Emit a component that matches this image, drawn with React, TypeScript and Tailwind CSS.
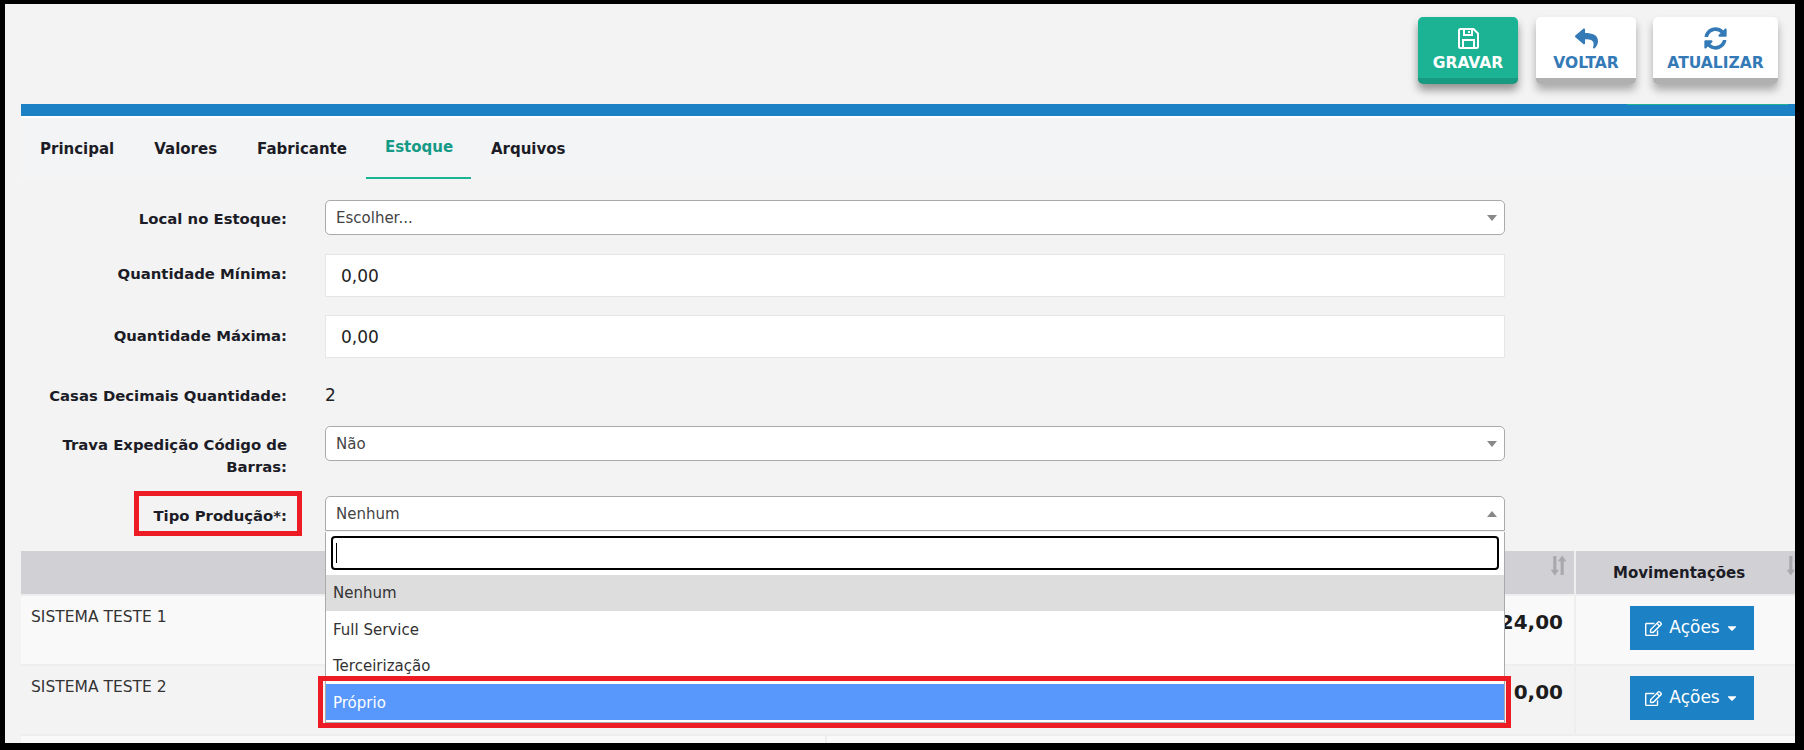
import { FaReply, FaSyncAlt, FaRegEdit, FaCaretDown } from 'react-icons/fa';

const font = "font-['DejaVu_Sans',sans-serif]";

function ActionButton({ icon, label, className }: { icon: React.ReactNode; label: string; className: string }) {
  return (
    <button className={`flex flex-col items-center rounded-[5px] pt-[6px] h-[67px] text-[15.5px] font-bold ${className}`}>
      <span className="text-[23px] h-[30px] flex items-center">{icon}</span>
      <span className="leading-[20px]">{label}</span>
    </button>
  );
}

function SaveIcon() {
  return (
    <svg width="21" height="21" viewBox="0 0 21 21" fill="none" stroke="currentColor" strokeWidth="2">
      <path d="M2.500 1h13l4.500 4.500v13a1.500 1.500 0 0 1-1.500 1.500h-16A1.500 1.500 0 0 1 1 18.500v-16A1.500 1.500 0 0 1 2.500 1z" />
      <path d="M6 1v6h8V1" />
      <path d="M11 3v2" />
      <path d="M5 20v-8h11v8" />
    </svg>
  );
}

function FormRow({ label, children, className, labelTop }: { label: React.ReactNode; children: React.ReactNode; className: string; labelTop: string }) {
  return (
    <div className={`flex items-start ${className}`}>
      <label className={`w-[266px] text-right text-[#1c1c26] text-[14.85px] leading-[22px] font-bold ${labelTop}`}>{label}</label>
      <div className="ml-[38px] w-[1180px]">{children}</div>
    </div>
  );
}

function SelectBox({ value, open }: { value: string; open?: boolean }) {
  return (
    <div className={`h-[35px] bg-white border border-[#aaaaaa] flex items-center justify-between pl-[10px] pr-[7px] text-[15px] text-[#444444] ${open ? 'rounded-t-[5px]' : 'rounded-[5px]'}`}>
      <span className="pt-[2px]">{value}</span>
      <svg width="10" height="6" viewBox="0 0 10 6" className="text-[#888888]" fill="currentColor">
        <path d={open ? 'M5 0l5 6H0z' : 'M0 0h10L5 6z'} />
      </svg>
    </div>
  );
}

function SortIcon() {
  return (
    <svg width="17" height="21" viewBox="0 0 16 20" className="text-[#a9a9ad]" fill="currentColor">
      <path d="M3 1h3v13h2.500L4.500 19.500.5 14H3z" />
      <path d="M10 19h3V6h2.500L11.500.5 7.500 6H10z" />
    </svg>
  );
}

function TableRow({ name, total, striped }: { name: string; total: string; striped: boolean }) {
  return (
    <div className={`flex h-[70px] border-b-2 border-[#eeeeee] ${striped ? 'bg-[#f9f9f9]' : 'bg-[#f3f3f3]'}`}>
      <div className="flex-1 relative pl-[10px] pt-[10px] text-[15.5px] text-[#333333]">
        {name}
        <span className="absolute right-[11px] top-[10px] text-[20px] leading-[32px] font-bold text-[#1c1c1c]">{total}</span>
      </div>
      <div className="w-[221px] border-l-2 border-[#eeeeee] pl-[54px] pt-[10px]">
        <button className="w-[124px] h-[44px] bg-[#1c81c5] text-white text-[17px] flex items-center justify-center">
          <FaRegEdit className="text-[17px] mr-[7px]" />
          <span>Ações</span>
          <FaCaretDown className="text-[14px] ml-[5px]" />
        </button>
      </div>
    </div>
  );
}

export default function App() {
  return (
    <div className={`relative h-screen w-full overflow-hidden bg-[#f3f3f4] border-solid border-black border-t-4 border-l-[5px] border-r-[9px] border-b-[7px] ${font}`}>
      {/* Toolbar */}
      <div className="h-[100px] flex justify-end items-start gap-[17px] pt-[13px] pr-[17px] pl-[16px]">
        <ActionButton
          icon={<SaveIcon />}
          label="GRAVAR"
          className="w-[100px] mr-[1px] bg-[#1bb394] text-white border-b-[6px] border-[#189a80] shadow-[0_6px_8px_rgba(0,0,0,0.4)]"
        />
        <ActionButton
          icon={<FaReply />}
          label="VOLTAR"
          className="w-[100px] bg-white text-[#337ab7] border-b-[6px] border-[#b0b0b0] shadow-[0_6px_8px_rgba(0,0,0,0.3)]"
        />
        <ActionButton
          icon={<FaSyncAlt />}
          label="ATUALIZAR"
          className="w-[125px] bg-white text-[#337ab7] border-b-[6px] border-[#b0b0b0] shadow-[0_6px_8px_rgba(0,0,0,0.3)]"
        />
      </div>

      <div className="pl-[16px]">
        <div className="relative h-[12px] bg-[#1c81c5]">
          <div className="absolute top-0 right-[7px] w-[161px] h-px bg-[#1bb394]" />
        </div>
        {/* Tabs */}
        <div className="h-[63px] bg-[#f3f4f6] border-t-2 border-white flex text-[15px] font-bold text-[#1c1c26]">
          <div className="pl-[19px] pr-[20px] pt-[20px]">Principal</div>
          <div className="px-[20px] pt-[20px]">Valores</div>
          <div className="px-[20px] pt-[20px]">Fabricante</div>
          <div className="ml-[-1px] pl-[19px] pt-[18px] w-[105px] h-[61px] border-b-2 border-[#1ab394] text-[#149a86]">Estoque</div>
          <div className="px-[20px] pt-[20px]">Arquivos</div>
        </div>

        {/* Form */}
        <FormRow label="Local no Estoque:" labelTop="pt-[8px]" className="mt-[21px]">
          <SelectBox value="Escolher..." />
        </FormRow>
        <FormRow label="Quantidade Mínima:" labelTop="pt-[9px]" className="mt-[19px]">
          <div className="h-[43px] bg-white border border-[#e5e6e7] flex items-center pl-[15px] pt-[2px] text-[17px] text-[#222222]">0,00</div>
        </FormRow>
        <FormRow label="Quantidade Máxima:" labelTop="pt-[10px]" className="mt-[18px]">
          <div className="h-[43px] bg-white border border-[#e5e6e7] flex items-center pl-[15px] pt-[3px] text-[17px] text-[#222222]">0,00</div>
        </FormRow>
        <FormRow label="Casas Decimais Quantidade:" labelTop="pt-[3px]" className="mt-[24px]">
          <div className="text-[17px] leading-[25px] pt-[1px] text-[#222222]">2</div>
        </FormRow>
        <FormRow label={<>Trava Expedição Código de<br />Barras:</>} labelTop="pt-[8px]" className="mt-[18px] h-[60px]">
          <SelectBox value="Não" />
        </FormRow>
        <FormRow label="Tipo Produção*:" labelTop="pt-[9px]" className="mt-[10px]">
          <SelectBox value="Nenhum" open />
        </FormRow>

        {/* Table behind the open dropdown */}
        <div className="mt-[20px]">
          <div className="flex h-[45px] bg-[#d1d1d5] border-b-2 border-[#eeeeee]">
            <div className="flex-1 flex justify-end pr-[7px] pt-[4px]">
              <SortIcon />
            </div>
            <div className="w-[221px] border-l-2 border-[#eeeeee] pl-[37px] pt-[11px] text-[15px] font-bold text-[#1c1c26] flex justify-between">
              <span>Movimentações</span>
              <span className="mr-[-8px] -mt-[7px]"><SortIcon /></span>
            </div>
          </div>
          <TableRow name="SISTEMA TESTE 1" total="1.624,00" striped />
          <TableRow name="SISTEMA TESTE 2" total="0,00" striped={false} />
          <div className="h-[10px] bg-[#f9f9f9] flex">
            <div className="w-[806px] border-r-2 border-[#eeeeee]" />
          </div>
        </div>
      </div>

      {/* Open dropdown panel */}
      <div className="absolute left-[320px] top-[528px] w-[1180px] h-[191px] bg-white border-x border-b border-[#aaaaaa] text-[15px] text-[#333333]">
        <div className="px-[5px] pt-[4px] pb-[5px]">
          <div className="h-[34px] border-2 border-black rounded-[4px] flex items-center pl-[3px]">
            <span className="w-px h-[20px] bg-black" />
          </div>
        </div>
        <div className="h-[36px] bg-[#dddddd] flex items-center pl-[7px]">Nenhum</div>
        <div className="h-[36px] flex items-center pl-[7px] pt-[2px]">Full Service</div>
        <div className="h-[36px] flex items-center pl-[7px] pt-[3px]">Terceirização</div>
        <div className="h-[36px] mt-[1px] bg-[#5897fb] text-white flex items-center pl-[7px] pt-[2px]">Próprio</div>
      </div>

      {/* Red annotations */}
      <div className="absolute left-[129px] top-[487px] w-[168px] h-[45px] border-[5px] border-[#ed1c24]" />
      <div className="absolute left-[313px] top-[672px] w-[1193px] h-[52px] border-[5px] border-[#ed1c24]" />
    </div>
  );
}
